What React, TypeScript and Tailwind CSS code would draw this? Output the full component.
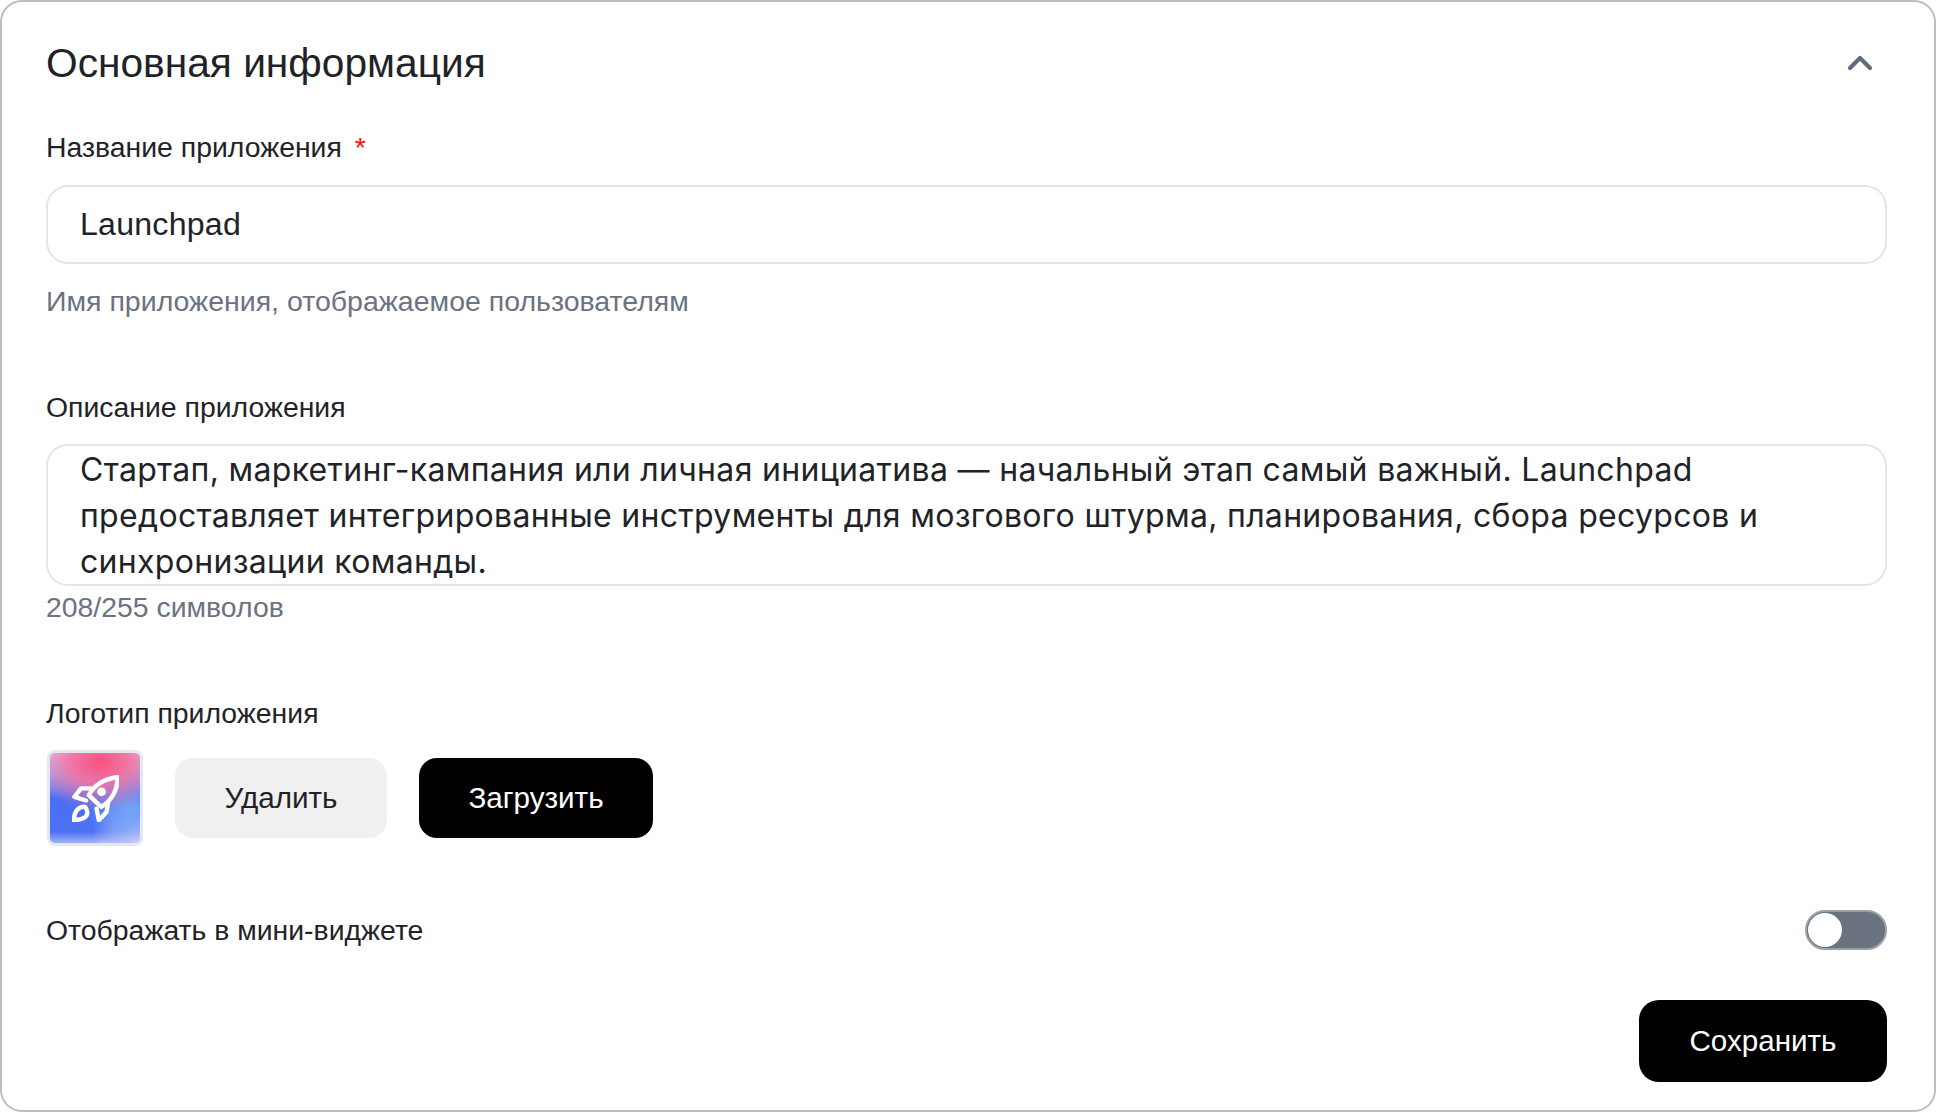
import { useState } from "react"

const font = "font-['Liberation_Sans',Arial,sans-serif]"

function Rocket() {
  return (
    <svg viewBox="0 0 140 140" className="h-[47px] w-[47px]" fill="none" stroke="white" strokeWidth="13" strokeLinejoin="round" strokeLinecap="round">
      <path d="M135 6C108 10 70 22 50 60L87 95C120 75 138 40 135 6Z" />
      <path d="M55 40L27 40L7 65L42 76" />
      <path d="M108 80L103 110L80 135L73 100" />
      <path d="M5 135C7 110 17 94 38 94C48 105 48 118 40 125C30 133 17 133 5 135Z" />
      <circle cx="88" cy="50" r="13" fill="white" stroke="none" />
    </svg>
  )
}

export default function App() {
  const [enabled] = useState(false)

  return (
    <div className={`${font} h-[1112px] w-full rounded-[22px] border-2 border-[#bdbdbd] bg-white pl-[44px] pr-[47px] text-[#1f2328]`}>
      <div className="flex h-[125px] items-center justify-between pb-[2px]">
        <h2 className="text-[40.7px] font-normal leading-none">Основная информация</h2>
        <svg viewBox="0 0 24 24" className="mb-[2px] mr-[7px] h-[40px] w-[40px]" fill="none" stroke="#5f6b7a" strokeWidth="2.5" strokeLinecap="round" strokeLinejoin="round">
          <path d="M6 15l6-6 6 6" />
        </svg>
      </div>

      <label className="block h-[40px] text-[28.4px] leading-[40px]">
        Название приложения <span className="ml-[5px] text-[#f01414]">*</span>
      </label>
      <input
        readOnly
        value="Launchpad"
        className="mt-[18px] block h-[79px] w-full rounded-[22px] border-2 border-[#e3e6e8] px-[32px] text-[32.1px] tracking-[0.25px] text-[#1f2328] outline-none"
      />
      <p className="mt-[17px] text-[28.5px] leading-[40px] text-[#6b7280]">Имя приложения, отображаемое пользователям</p>

      <label className="mt-[66px] block h-[40px] text-[28.4px] leading-[40px]">Описание приложения</label>
      <textarea
        readOnly
        value="Стартап, маркетинг-кампания или личная инициатива — начальный этап самый важный. Launchpad предоставляет интегрированные инструменты для мозгового штурма, планирования, сбора ресурсов и синхронизации команды."
        className="mt-[17px] block h-[142px] w-full resize-none overflow-hidden rounded-[22px] border-2 border-[#e3e6e8] px-[32px] pt-[1px] font-['Inter',sans-serif] text-[32px] leading-[46px] tracking-[0.31px] text-[#1f2328] outline-none"
      />
      <p className="mt-[1px] text-[28.4px] leading-[40px] text-[#6b7280]">208/255 символов</p>

      <label className="mt-[66px] block h-[40px] text-[28.4px] leading-[40px]">Логотип приложения</label>
      <div className="mt-[17px] flex items-center gap-[32px]">
        <div className="ml-[1px] flex h-[96px] w-[96px] items-center justify-center rounded-[8px] border-[3px] border-[#e6e7f4] bg-[radial-gradient(ellipse_70%_52%_at_55%_12%,#f9507f_0%,rgba(247,110,155,0.85)_45%,rgba(240,150,190,0)_100%),radial-gradient(circle_at_85%_62%,#6ea4f8_0%,rgba(110,164,248,0)_42%),radial-gradient(circle_at_100%_100%,#e6d8f8_0%,rgba(230,216,248,0)_38%),linear-gradient(#e2dcf4,#8f9ff5_30%,#4a6ff5_50%,#4d72f4_85%,#b4c4f6)] bg-origin-border">
          <Rocket />
        </div>
        <div className="flex items-center gap-[32px]">
          <button className="flex h-[80px] w-[212px] items-center justify-center rounded-[18px] bg-[#f0f0f0] text-[29.6px] text-[#1f2328]">Удалить</button>
          <button className="flex h-[80px] w-[234px] items-center justify-center rounded-[18px] bg-black text-[29.6px] text-white">Загрузить</button>
        </div>
      </div>

      <div className="mt-[64px] flex h-[40px] items-center justify-between">
        <span className="text-[28.4px]">Отображать в мини-виджете</span>
        <button className={`flex h-[40px] w-[82px] items-center rounded-full border-2 border-[#9aa1ad] bg-[#6b7280] pl-[1px] ${enabled ? "justify-end" : "justify-start"}`}>
          <span className="h-[34px] w-[34px] rounded-full bg-white" />
        </button>
      </div>

      <div className="mt-[50px] flex justify-end">
        <button className="flex h-[82px] w-[248px] items-center justify-center rounded-[20px] bg-black text-[29.6px] text-white">Сохранить</button>
      </div>
    </div>
  )
}
